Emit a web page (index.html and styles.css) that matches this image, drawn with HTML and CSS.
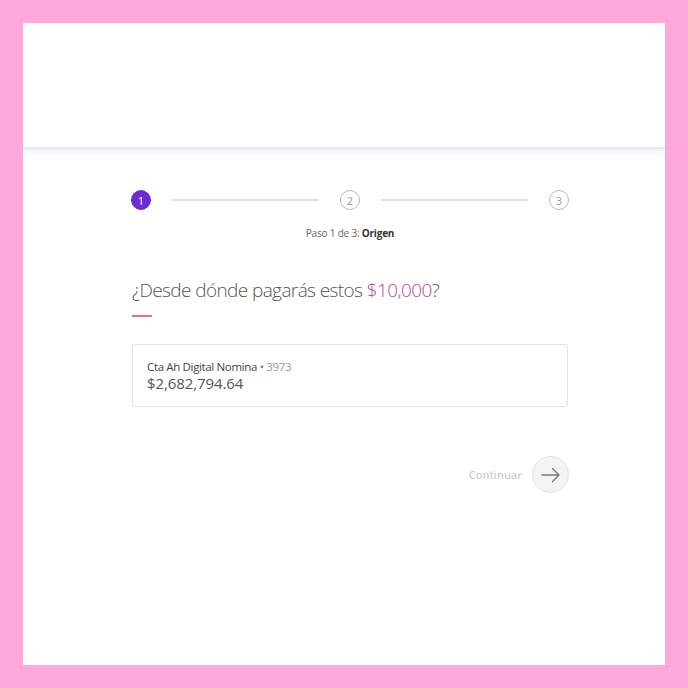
FILE: index.html
```html
<!DOCTYPE html>
<html lang="es">
<head>
<meta charset="utf-8">
<link rel="stylesheet" href="styles.css">
</head>
<body>
<div class="frame">
  <header class="topbar"></header>
  <main class="content">
    <div class="stepper">
      <span class="step active">1</span>
      <span class="line"></span>
      <span class="step">2</span>
      <span class="line"></span>
      <span class="step">3</span>
    </div>
    <p class="step-label">Paso 1 de 3: <strong>Origen</strong></p>
    <h1 class="question">¿Desde dónde pagarás estos <span class="amount">$10,000</span>?</h1>
    <div class="accent"></div>
    <div class="account-card">
      <div class="account-name">Cta Ah Digital Nomina <span class="dot">•</span> <span class="num">3973</span></div>
      <div class="account-balance">$2,682,794.64</div>
    </div>
    <div class="actions">
      <span class="continue-label">Continuar</span>
      <span class="continue-btn">
        <svg width="20" height="16" viewBox="0 0 20 16" fill="none" stroke="#777" stroke-width="1.4" stroke-linecap="round" stroke-linejoin="round"><path d="M1 8h17M11.5 1.5L18 8l-6.5 6.5"/></svg>
      </span>
    </div>
  </main>
</div>
</body>
</html>
```
FILE: styles.css
```css
html, body { margin: 0; padding: 0; }
body {
  background: #fea8dc;
  padding: 23px;
  font-family: "Open Sans", "Noto Sans", sans-serif;
  color: #555;
}
.frame {
  width: 642px;
  height: 642px;
  background: #fff;
  overflow: hidden;
}
.topbar {
  height: 124px;
  border-bottom: 2px solid #e6e8ef;
  box-shadow: 0 3px 6px rgba(200, 205, 220, 0.35);
  background: #fff;
}
.content {
  margin-left: 108px;
  width: 438px;
  padding-top: 41px;
}
.stepper {
  display: flex;
  align-items: center;
  height: 20px;
}
.step {
  box-sizing: border-box;
  width: 20px;
  height: 20px;
  border-radius: 50%;
  border: 1px solid #b8b8b8;
  color: #999;
  font-size: 11px;
  display: flex;
  align-items: center;
  justify-content: center;
  line-height: 1;
  flex: none;
}
.step.active {
  background: #6c2bd6;
  border-color: #6c2bd6;
  color: #fff;
}
.line {
  flex: 1;
  height: 2px;
  background: #e0e0e0;
  margin: 0 21px;
}
.step-label {
  margin: 16px 0 0;
  text-align: center;
  font-size: 10px;
  color: #666;
  letter-spacing: -0.2px;
}
.step-label strong { color: #333; font-weight: 700; }
.question {
  margin: 36px 0 0 1px;
  font-size: 19px;
  font-weight: 300;
  color: #555;
  letter-spacing: -0.6px;
  line-height: 28px;
}
.amount { color: #c0438f; }
.accent {
  width: 20px;
  height: 2px;
  background: #eb6f7a;
  margin: 11px 0 0 1px;
}
.account-card {
  margin: 27px 0 0 1px;
  box-sizing: border-box;
  width: 436px;
  height: 63px;
  border: 1px solid #e3e3e3;
  border-radius: 3px;
  padding: 15px 14px 0;
}
.account-name {
  font-size: 11.5px;
  color: #444;
  letter-spacing: -0.35px;
  line-height: 14px;
}
.account-name .dot { color: #777; }
.account-name .num { color: #999; }
.account-balance {
  font-size: 15px;
  color: #555;
  line-height: 18px;
  letter-spacing: -0.1px;
}
.actions {
  display: flex;
  align-items: center;
  justify-content: flex-end;
  margin-top: 49px;
  gap: 10px;
}
.continue-label {
  font-size: 11px;
  color: #cfcfcf;
  font-weight: 600;
}
.continue-btn {
  box-sizing: border-box;
  width: 37px;
  height: 37px;
  border-radius: 50%;
  background: #f4f4f4;
  border: 1px solid #e3e3e3;
  display: flex;
  align-items: center;
  justify-content: center;
}
```
